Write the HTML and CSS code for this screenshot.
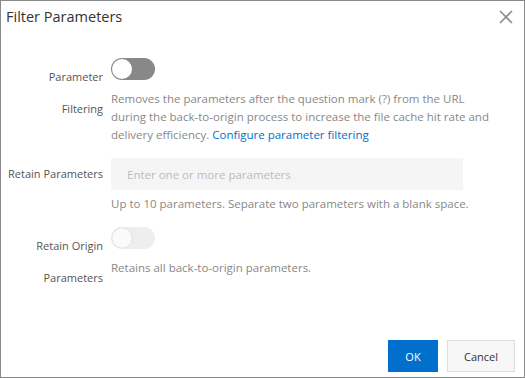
FILE: index.html
```html
<!doctype html>
<html lang="en">
  <head>
    <meta charset="UTF-8" />
    <meta name="viewport" content="width=device-width, initial-scale=1.0" />
    <title>Filter Parameters</title>
    <link rel="stylesheet" href="styles.css">
  </head>
  <body>
    <div class="dialog">
      <header class="dialog-header">
        <h1>Filter Parameters</h1>
        <button class="close" aria-label="Close">
          <svg width="14" height="14" viewBox="0 0 14 14">
            <path d="M1 1 L13 13 M13 1 L1 13" stroke="#8c8c8c" stroke-width="1.6" fill="none" />
          </svg>
        </button>
      </header>

      <div class="dialog-body">
        <!-- Parameter Filtering -->
        <div class="form-row">
          <label class="form-label form-label-switch">Parameter Filtering</label>
          <div class="form-control">
            <div class="switch-box">
              <span class="switch"></span>
            </div>
            <p class="help">
              Removes the parameters after the question mark (?) from the URL
              during the back-to-origin process to increase the file cache hit
              rate and delivery efficiency.
              <a href="#">Configure parameter filtering</a>
            </p>
          </div>
        </div>

        <!-- Retain Parameters -->
        <div class="form-row">
          <label class="form-label">Retain Parameters</label>
          <div class="form-control">
            <input class="text-input" type="text" placeholder="Enter one or more parameters" />
            <p class="help help-input">
              Up to 10 parameters. Separate two parameters with a blank space.
            </p>
          </div>
        </div>

        <!-- Retain Origin Parameters -->
        <div class="form-row">
          <label class="form-label form-label-switch">Retain Origin Parameters</label>
          <div class="form-control">
            <div class="switch-box">
              <span class="switch is-disabled"></span>
            </div>
            <p class="help">Retains all back-to-origin parameters.</p>
          </div>
        </div>
      </div>

      <footer class="dialog-footer">
        <button class="btn btn-primary">OK</button>
        <button class="btn">Cancel</button>
      </footer>
    </div>
  </body>
</html>
```

FILE: styles.css
```css
* {
  box-sizing: border-box;
}

body {
  margin: 0;
  font-family: "Open Sans", sans-serif;
  font-size: 11.5px;
  color: #333;
  background: #fff;
}

.dialog {
  width: 525px;
  height: 378px;
  border: 1px solid #8a8a8a;
  display: flex;
  flex-direction: column;
}

.dialog-header {
  height: 30px;
  display: flex;
  align-items: center;
  justify-content: space-between;
  padding: 0 11px 0 5px;
}

.dialog-header h1 {
  margin: 0;
  font-size: 14.5px;
  font-weight: normal;
  color: #333;
}

.close {
  border: none;
  background: none;
  padding: 0;
  width: 14px;
  height: 14px;
  margin-top: 1px;
  cursor: pointer;
}

.close svg {
  display: block;
}

.dialog-body {
  padding-top: 27px;
}

.form-row {
  display: flex;
  margin-bottom: 14px;
}

.form-label {
  width: 102px;
  flex-shrink: 0;
  padding-left: 6px;
  text-align: right;
  font-size: 11px;
  line-height: 32px;
  color: #555;
}

.form-label-switch {
  padding-top: 3px;
}

.form-control {
  margin-left: 8px;
  width: 382px;
}

.switch-box {
  height: 32px;
}

.switch {
  display: block;
  position: relative;
  width: 44px;
  height: 22px;
  border-radius: 11px;
  background: #888;
}

.switch::after {
  content: "";
  position: absolute;
  left: 1px;
  top: 1px;
  width: 20px;
  height: 20px;
  border-radius: 50%;
  background: #fff;
}

.switch.is-disabled {
  background: #eee;
}

.switch.is-disabled::after {
  background: #fafafa;
  box-shadow: 0 0 1px rgba(0, 0, 0, 0.25);
}

.help {
  margin: 0;
  line-height: 18px;
  color: #888;
}

.help a {
  color: #0070cc;
  text-decoration: none;
}

.help-input {
  margin-top: 5px;
}

.text-input {
  display: block;
  width: 352px;
  height: 32px;
  border: none;
  background: #f5f5f5;
  padding: 0 16px;
  font-family: inherit;
  font-size: 11.5px;
  color: #333;
  outline: none;
}

.text-input::placeholder {
  color: #bbb;
}

.dialog-footer {
  margin-top: auto;
  display: flex;
  justify-content: flex-end;
  gap: 9px;
  padding: 0 9px 5px 0;
}

.btn {
  height: 32px;
  min-width: 50px;
  padding: 0 16px;
  border: 1px solid #ddd;
  background: #f7f7f7;
  color: #333;
  font-family: inherit;
  font-size: 11px;
  cursor: pointer;
}

.btn-primary {
  background: #0070cc;
  border-color: #0070cc;
  color: #fff;
}
```
